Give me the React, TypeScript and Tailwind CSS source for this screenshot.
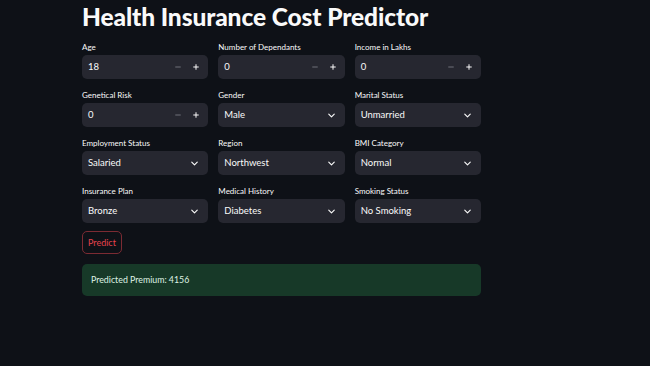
import { ChevronDown, Minus, Plus } from "lucide-react";

const font = { fontFamily: "Lato, 'Noto Sans', sans-serif" };

function NumberField({ label, value }: { label: string; value: string }) {
  return (
    <div className="flex flex-col">
      <label className="text-[8px] leading-[12px] text-[#fafafa] mb-[2px]">{label}</label>
      <div className="h-[24px] rounded-[5px] bg-[#262730] flex items-center text-[9.5px] text-[#fafafa]">
        <span className="flex-1 pl-[6px]">{value}</span>
        <span className="w-[18px] flex justify-center text-[#7d7f88]">
          <Minus size={8} strokeWidth={2.5} />
        </span>
        <span className="w-[18px] flex justify-center mr-[3px]">
          <Plus size={8} strokeWidth={3} />
        </span>
      </div>
    </div>
  );
}

function SelectField({ label, value }: { label: string; value: string }) {
  return (
    <div className="flex flex-col">
      <label className="text-[8px] leading-[12px] text-[#fafafa] mb-[2px]">{label}</label>
      <div className="h-[24px] rounded-[5px] bg-[#262730] flex items-center text-[9.5px] text-[#fafafa]">
        <span className="flex-1 pl-[6px]">{value}</span>
        <ChevronDown size={11} strokeWidth={2.5} className="mr-[8px]" />
      </div>
    </div>
  );
}

export default function App() {
  return (
    <div className="w-[650px] h-[366px] bg-[#0e1117] overflow-hidden" style={font}>
      <div className="w-[399px] ml-[82px]">
        <h1 className="text-[24.5px] leading-[34px] font-black text-[#fafafa] tracking-[-0.1px]">
          Health Insurance Cost Predictor
        </h1>
        <div className="grid grid-cols-3 gap-x-[10px] gap-y-[10px] mt-[7px]">
          <NumberField label="Age" value="18" />
          <NumberField label="Number of Dependants" value="0" />
          <NumberField label="Income in Lakhs" value="0" />
          <NumberField label="Genetical Risk" value="0" />
          <SelectField label="Gender" value="Male" />
          <SelectField label="Marital Status" value="Unmarried" />
          <SelectField label="Employment Status" value="Salaried" />
          <SelectField label="Region" value="Northwest" />
          <SelectField label="BMI Category" value="Normal" />
          <SelectField label="Insurance Plan" value="Bronze" />
          <SelectField label="Medical History" value="Diabetes" />
          <SelectField label="Smoking Status" value="No Smoking" />
        </div>
        <button className="block mt-[8px] h-[23px] px-[5px] rounded-[5px] border border-[#7c2b33] text-[#e5434d] text-[9px]">
          Predict
        </button>
        <div className="mt-[10px] h-[32px] rounded-[5px] bg-[#173928] flex items-center pl-[9px] text-[8.8px] text-[#dff2e4]">
          Predicted Premium: 4156
        </div>
      </div>
    </div>
  );
}
